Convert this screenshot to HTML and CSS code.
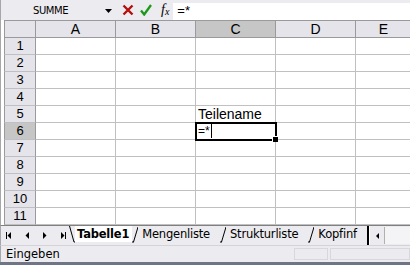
FILE: index.html
```html
<!DOCTYPE html>
<html lang="de">
<head>
  <meta charset="UTF-8" />
  <title>Tabelle1</title>
  <link rel="stylesheet" href="styles.css">
</head>
<body>
  <div class="xl-window">
    <!-- Formula bar -->
    <div class="xl-formula">
      <div class="xl-namebox">
        <span>SUMME</span>
        <svg class="xl-drop" width="7" height="4" viewBox="0 0 7 4"><path d="M0 0h7L3.5 4z" fill="#000"/></svg>
      </div>
      <svg class="xl-icon" width="12" height="12" viewBox="0 0 12 12">
        <path d="M1.5 1.5l9 9M10.5 1.5l-9 9" stroke="#b31010" stroke-width="2.4" fill="none"/>
      </svg>
      <svg class="xl-icon" width="12" height="12" viewBox="0 0 12 12">
        <path d="M1 6.5l3.2 4L11 1" stroke="#1a9a1a" stroke-width="2.3" fill="none"/>
      </svg>
      <span class="xl-fx">f<sub>x</sub></span>
      <div class="xl-input">=*</div>
    </div>

    <!-- Sheet grid -->
    <div class="xl-sheet">
      <div class="xl-corner"></div>
      <div class="xl-colhead">A</div>
      <div class="xl-colhead">B</div>
      <div class="xl-colhead xl-sel">C</div>
      <div class="xl-colhead">D</div>
      <div class="xl-colhead xl-last">E</div>

      <div class="xl-rowhead">1</div><div class="xl-cell"></div><div class="xl-cell"></div><div class="xl-cell"></div><div class="xl-cell"></div><div class="xl-cell"></div>
      <div class="xl-rowhead">2</div><div class="xl-cell"></div><div class="xl-cell"></div><div class="xl-cell"></div><div class="xl-cell"></div><div class="xl-cell"></div>
      <div class="xl-rowhead">3</div><div class="xl-cell"></div><div class="xl-cell"></div><div class="xl-cell"></div><div class="xl-cell"></div><div class="xl-cell"></div>
      <div class="xl-rowhead">4</div><div class="xl-cell"></div><div class="xl-cell"></div><div class="xl-cell"></div><div class="xl-cell"></div><div class="xl-cell"></div>
      <div class="xl-rowhead">5</div><div class="xl-cell"></div><div class="xl-cell"></div><div class="xl-cell xl-text">Teilename</div><div class="xl-cell"></div><div class="xl-cell"></div>
      <div class="xl-rowhead xl-sel">6</div><div class="xl-cell"></div><div class="xl-cell"></div><div class="xl-cell xl-active"><span class="xl-edit">=*</span><span class="xl-caret"></span><span class="xl-handle"></span></div><div class="xl-cell"></div><div class="xl-cell"></div>
      <div class="xl-rowhead">7</div><div class="xl-cell"></div><div class="xl-cell"></div><div class="xl-cell"></div><div class="xl-cell"></div><div class="xl-cell"></div>
      <div class="xl-rowhead">8</div><div class="xl-cell"></div><div class="xl-cell"></div><div class="xl-cell"></div><div class="xl-cell"></div><div class="xl-cell"></div>
      <div class="xl-rowhead">9</div><div class="xl-cell"></div><div class="xl-cell"></div><div class="xl-cell"></div><div class="xl-cell"></div><div class="xl-cell"></div>
      <div class="xl-rowhead">10</div><div class="xl-cell"></div><div class="xl-cell"></div><div class="xl-cell"></div><div class="xl-cell"></div><div class="xl-cell"></div>
      <div class="xl-rowhead">11</div><div class="xl-cell"></div><div class="xl-cell"></div><div class="xl-cell"></div><div class="xl-cell"></div><div class="xl-cell"></div>
    </div>

    <!-- Sheet tabs -->
    <div class="xl-tabbar">
      <div class="xl-nav">
        <svg width="5" height="7" viewBox="0 0 5 7"><path d="M0 0h1v7H0zM5 0v7L1.5 3.5z" fill="#000"/></svg>
        <svg width="4" height="7" viewBox="0 0 4 7"><path d="M4 0v7L0.5 3.5z" fill="#000"/></svg>
        <svg width="4" height="7" viewBox="0 0 4 7"><path d="M0 0v7l3.5-3.5z" fill="#000"/></svg>
        <svg width="5" height="7" viewBox="0 0 5 7"><path d="M0 0v7l3.5-3.5zM4 0h1v7H4z" fill="#000"/></svg>
      </div>
      <div class="xl-tabs">
        <svg class="xl-slant" width="6" height="17" viewBox="0 0 6 17"><path d="M0.5 0L5 16h1" stroke="#000" fill="none"/></svg>
        <span class="xl-tab xl-tab-active">Tabelle1</span>
        <svg class="xl-slant" width="6" height="17" viewBox="0 0 6 17"><path d="M6 1L1.5 16M0 16h2" stroke="#000" fill="none"/></svg>
        <span class="xl-tab">Mengenliste</span>
        <svg class="xl-slant" width="6" height="17" viewBox="0 0 6 17"><path d="M6 1L1.5 16M0 16h2" stroke="#000" fill="none"/></svg>
        <span class="xl-tab">Strukturliste</span>
        <svg class="xl-slant" width="6" height="17" viewBox="0 0 6 17"><path d="M6 1L1.5 16M0 16h2" stroke="#000" fill="none"/></svg>
        <span class="xl-tab xl-tab-cut">Kopfinf</span>
      </div>
      <div class="xl-split"></div>
      <div class="xl-scroll">
        <div class="xl-scroll-btn">
          <svg width="3" height="6" viewBox="0 0 3 6"><path d="M3 0v6L0 3z" fill="#000"/></svg>
        </div>
        <div class="xl-scroll-track"></div>
      </div>
    </div>

    <!-- Status bar -->
    <div class="xl-status">
      <span class="xl-status-text">Eingeben</span>
      <div class="xl-panel xl-panel-small"></div>
      <div class="xl-panel xl-panel-wide"></div>
    </div>
  </div>
</body>
</html>
```

FILE: styles.css
```css
:root {
  --xl-face: #ecebef;
  --xl-head: #e4e4ea;
  --xl-head-sel: #c6c6c6;
  --xl-grid: #c0c0c0;
  --xl-head-line: #9a9a9a;
}

body {
  margin: 0;
  font-family: "Liberation Sans", Arial, sans-serif;
  color: #000;
}

.xl-window {
  width: 410px;
  height: 265px;
  background: var(--xl-face);
  display: flex;
  flex-direction: column;
  overflow: hidden;
  box-sizing: border-box;
  border-bottom: 3px solid #6f7585;
}

/* formula bar */
.xl-formula {
  height: 20px;
  display: flex;
  align-items: center;
  padding-left: 3px;
  border-left: 1px solid #a7a6aa;
  box-sizing: border-box;
}

.xl-namebox {
  width: 112px;
  display: flex;
  align-items: center;
  justify-content: space-between;
  padding-left: 29px;
  padding-right: 4px;
  box-sizing: border-box;
  font-family: "DejaVu Sans", sans-serif;
  font-size: 10px;
  letter-spacing: -0.4px;
}

.xl-drop {
  margin-top: 1px;
}

.xl-icon {
  margin-left: 6px;
}

.xl-fx {
  font-family: "Liberation Serif", serif;
  font-style: italic;
  font-size: 14px;
  margin-left: 9px;
  line-height: 1;
}

.xl-fx sub {
  font-size: 10px;
  vertical-align: -1px;
}

.xl-input {
  flex: 1;
  align-self: stretch;
  margin-top: 3px;
  margin-left: 4px;
  background: #fff;
  font-size: 13px;
  line-height: 16px;
  padding-left: 4px;
}

/* grid */
.xl-sheet {
  display: grid;
  grid-template-columns: 32px 80px 80px 80px 80px 55px;
  grid-template-rows: 18px repeat(11, 17px);
  padding-left: 3px;
  border-left: 1px solid #a7a6aa;
  background: #fff;
  box-sizing: border-box;
}

.xl-corner,
.xl-colhead,
.xl-rowhead {
  background: var(--xl-head);
  box-sizing: border-box;
  border-right: 1px solid var(--xl-head-line);
  border-bottom: 1px solid var(--xl-head-line);
}

.xl-colhead {
  border-top: 1px solid var(--xl-head-line);
  text-align: center;
  font-size: 14px;
  line-height: 17px;
}

.xl-corner {
  border-top: 1px solid var(--xl-head-line);
  border-left: 1px solid var(--xl-head-line);
}

.xl-rowhead {
  border-left: 1px solid var(--xl-head-line);
  border-bottom-color: var(--xl-grid);
  text-align: center;
  font-size: 13px;
  line-height: 16px;
}

.xl-last {
  border-right: none;
}

.xl-sel {
  background: var(--xl-head-sel);
}

.xl-cell {
  box-sizing: border-box;
  border-right: 1px solid var(--xl-grid);
  border-bottom: 1px solid var(--xl-grid);
  font-size: 14px;
  line-height: 16px;
  white-space: nowrap;
}

.xl-text {
  padding-left: 2px;
}

.xl-active {
  position: relative;
  outline: 2px solid #000;
  outline-offset: -1px;
  padding-left: 2px;
  display: flex;
  align-items: center;
  z-index: 1;
}

.xl-edit {
  font-size: 12px;
  line-height: 14px;
}

.xl-caret {
  width: 1px;
  height: 14px;
  background: #000;
  margin-left: 1px;
}

.xl-handle {
  position: absolute;
  right: -3px;
  bottom: -3px;
  width: 5px;
  height: 5px;
  background: #000;
  border: 1px solid #fff;
  border-width: 1px 0 0 1px;
}

/* tabs */
.xl-tabbar {
  height: 19px;
  display: flex;
  align-items: stretch;
  padding-left: 3px;
  border-left: 1px solid #a7a6aa;
  border-top: 1px solid #808080;
  font-family: "DejaVu Sans", sans-serif;
  font-size: 11.5px;
  letter-spacing: -0.2px;
}

.xl-nav {
  width: 65px;
  display: flex;
  align-items: center;
  justify-content: space-between;
  padding: 0 3px 0 2px;
  box-sizing: border-box;
}

.xl-tabs {
  display: flex;
  align-items: flex-start;
  overflow: hidden;
  width: 298px;
}

.xl-slant {
  flex: none;
}

.xl-tab {
  line-height: 16px;
  padding: 0 10px 0 4px;
  white-space: nowrap;
}

.xl-tab-active {
  background: #fff;
  font-weight: bold;
  padding: 0 3px 0 2px;
}

.xl-tab-cut {
  padding-right: 0;
}

.xl-split {
  width: 2px;
  background: #000;
  border-right: 1px solid #fff;
}

.xl-scroll {
  flex: 1;
  display: flex;
  padding: 1px 0;
}

.xl-scroll-btn {
  width: 14px;
  display: flex;
  align-items: center;
  justify-content: center;
  border-right: 1px solid #b0b0b0;
}

.xl-scroll-track {
  flex: 1;
  background: #f4f4f6;
}

/* status bar */
.xl-status {
  flex: 1;
  display: flex;
  align-items: center;
  padding-left: 5px;
  border-left: 1px solid #a7a6aa;
  border-top: 1px solid #d4d4d8;
  font-family: "DejaVu Sans", sans-serif;
  font-size: 11.5px;
}

.xl-status-text {
  flex: 1;
}

.xl-panel {
  align-self: stretch;
  margin: 2px 0 2px 2px;
  border: 1px solid #d8d8dc;
}

.xl-panel-small {
  width: 32px;
}

.xl-panel-wide {
  width: 78px;
}
```
